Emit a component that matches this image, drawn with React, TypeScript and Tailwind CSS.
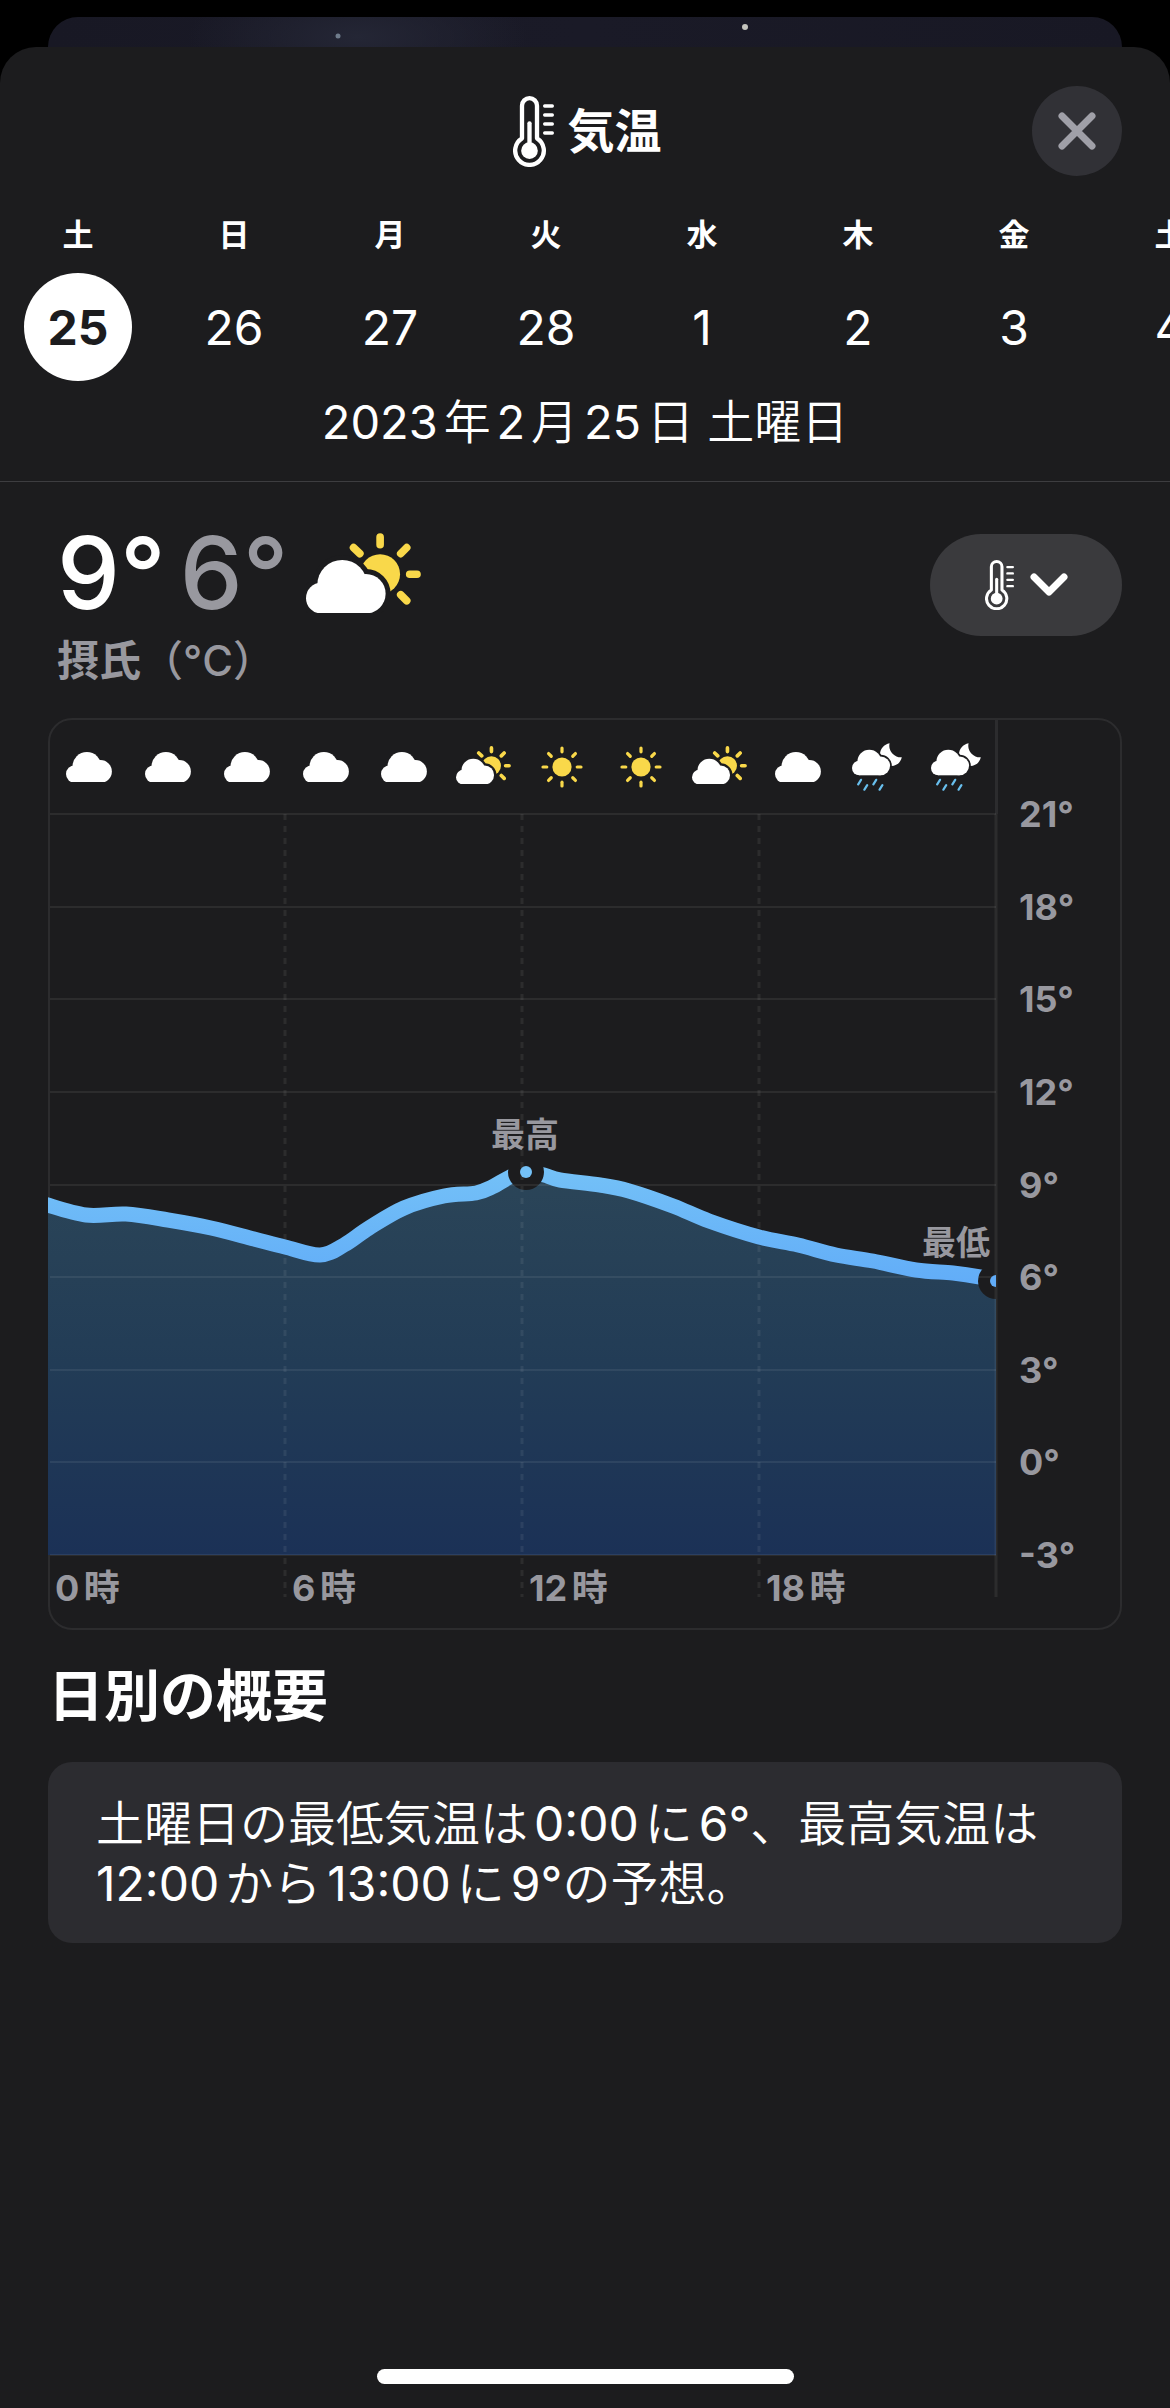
import React from "react";

const DAYS = [
  { weekday: "土", day: 25 },
  { weekday: "日", day: 26 },
  { weekday: "月", day: 27 },
  { weekday: "火", day: 28 },
  { weekday: "水", day: 1 },
  { weekday: "木", day: 2 },
  { weekday: "金", day: 3 },
  { weekday: "土", day: 4 },
];

type Condition = "cloudy" | "partly" | "sunny" | "rainNight";

const CONDITIONS: Condition[] = [
  "cloudy", "cloudy", "cloudy", "cloudy", "cloudy", "partly",
  "sunny", "sunny", "partly", "cloudy", "rainNight", "rainNight",
];

// Chart geometry, in viewBox units
const PLOT = { left: 2, right: 948, top: 96, bottom: 837, axisEnd: 879 };
const TEMPS = [21, 18, 15, 12, 9, 6, 3, 0, -3];
const HOURS = [
  { x: 7, label: "0時" },
  { x: 244, label: "6時" },
  { x: 481, label: "12時" },
  { x: 718, label: "18時" },
];
const CURVE: [number, number][] = [
  [-4, 486], [38, 497], [78, 496], [120, 502], [163, 510], [206, 521], [237, 529],
  [272, 537], [296, 527], [321, 510], [356, 490], [396, 478], [428, 475],
  [444, 469], [462, 459], [478, 454], [496, 457], [512, 462], [552, 467],
  [581, 473], [625, 488], [661, 503], [711, 519], [750, 527], [788, 537],
  [825, 543], [868, 552], [905, 555], [932, 559], [954, 564],
];
const HIGH = { x: 478, y: 454 };
const LOW = { x: 948, y: 563 };

function smoothPath(points: [number, number][]) {
  let d = `M${points[0][0]} ${points[0][1]}`;
  for (let i = 0; i < points.length - 1; i++) {
    const p0 = points[i - 1] ?? points[i];
    const p1 = points[i];
    const p2 = points[i + 1];
    const p3 = points[i + 2] ?? p2;
    d += ` C${p1[0] + (p2[0] - p0[0]) / 6} ${p1[1] + (p2[1] - p0[1]) / 6}`;
    d += ` ${p2[0] - (p3[0] - p1[0]) / 6} ${p2[1] - (p3[1] - p1[1]) / 6}`;
    d += ` ${p2[0]} ${p2[1]}`;
  }
  return d;
}

function Thermometer({ className }: { className: string }) {
  return (
    <svg viewBox="0 0 123 213" className={className} fill="none" stroke="currentColor" aria-hidden="true">
      <path d="M27 127V29a22.5 22.5 0 0 1 45 0V127A43 43 0 1 1 27 127Z" strokeWidth="13" strokeLinejoin="round" />
      <path d="M49.5 82V160" strokeWidth="13" strokeLinecap="round" />
      <circle cx="49.5" cy="164" r="25" fill="currentColor" stroke="none" />
      <path d="M95 30H118M95 57H118M95 84H118M95 111H118" strokeWidth="10" strokeLinecap="round" />
    </svg>
  );
}

function CloudShape() {
  return (
    <>
      <circle cx="46" cy="115" r="46" />
      <circle cx="109" cy="75" r="75" />
      <circle cx="180" cy="101.5" r="59.5" />
      <rect x="46" y="80" width="134" height="81" />
    </>
  );
}

function Cloud({ className }: { className: string }) {
  return (
    <svg viewBox="0 0 240 161" className={className} fill="#fff" role="img" aria-label="曇り">
      <CloudShape />
    </svg>
  );
}

function PartlyCloudy({ className }: { className: string }) {
  return (
    <svg viewBox="0 0 346 242" className={className} role="img" aria-label="晴れ時々曇り">
      <circle cx="223" cy="124" r="60" fill="#f9d84a" />
      <path
        d="M223 12V35M312 124H334M285 62L303 44M143 44L162 62M285 186L303 204"
        stroke="#f9d84a"
        strokeWidth="23"
        strokeLinecap="round"
      />
      <g transform="translate(0 81)" fill="#1c1c1e" stroke="#1c1c1e" strokeWidth="30">
        <CloudShape />
      </g>
      <g transform="translate(0 81)" fill="#fff">
        <CloudShape />
      </g>
    </svg>
  );
}

function Sun({ className }: { className: string }) {
  return (
    <svg viewBox="-21 -21 42 42" className={className} role="img" aria-label="晴れ">
      <circle r="9.6" fill="#f9d84a" />
      {[0, 45, 90, 135, 180, 225, 270, 315].map((angle) => (
        <path
          key={angle}
          d="M0 -15.2V-19"
          transform={`rotate(${angle})`}
          stroke="#f9d84a"
          strokeWidth="3.2"
          strokeLinecap="round"
        />
      ))}
    </svg>
  );
}

function RainNight({ className }: { className: string }) {
  return (
    <svg viewBox="0 0 50 48" className={className} role="img" aria-label="夜間の雨">
      <path
        d="M37.6 .2C32 1.5 28 5.5 28 11.5C28 18 33 22.9 39.5 22.9C44.5 22.9 48.8 19.5 49.8 14.3A11.5 11.5 0 0 1 37.6 .2Z"
        fill="#fff"
      />
      <g transform="translate(0 6.7) scale(.159)" fill="#1c1c1e" stroke="#1c1c1e" strokeWidth="22">
        <CloudShape />
      </g>
      <g transform="translate(0 6.7) scale(.159)" fill="#fff">
        <CloudShape />
      </g>
      <path
        d="M9 36.8L6.2 41.3M15.2 42.2L12.4 46.7M24.2 36.8L21.4 41.3M30.4 42.2L27.6 46.7"
        stroke="#68bfee"
        strokeWidth="2.2"
        strokeLinecap="round"
      />
    </svg>
  );
}

function ConditionIcon({ type }: { type: Condition }) {
  if (type === "partly") return <PartlyCloudy className="w-[55px] -mt-1" />;
  if (type === "sunny") return <Sun className="w-[42px]" />;
  if (type === "rainNight") return <RainNight className="w-[50px]" />;
  return <Cloud className="w-[46px]" />;
}

function TemperatureChart() {
  const line = smoothPath(CURVE);
  const step = (PLOT.bottom - PLOT.top) / (TEMPS.length - 1);

  return (
    <svg viewBox="2 96 1070 814" className="block w-full overflow-visible" role="img" aria-label="気温">
      <defs>
        <linearGradient id="area" gradientUnits="userSpaceOnUse" x1="0" y1="454" x2="0" y2="837">
          <stop offset="0" stopColor="#2b4558" />
          <stop offset=".5" stopColor="#223c56" />
          <stop offset="1" stopColor="#1b3156" />
        </linearGradient>
        <linearGradient id="line" gradientUnits="userSpaceOnUse" x1="0" y1="450" x2="0" y2="570">
          <stop offset="0" stopColor="#74c1f7" />
          <stop offset="1" stopColor="#61acf8" />
        </linearGradient>
        <clipPath id="plot">
          <rect x={PLOT.left - 2} y={PLOT.top} width={PLOT.right - PLOT.left + 2} height={PLOT.bottom - PLOT.top} />
        </clipPath>
        <mask id="markers" maskUnits="userSpaceOnUse" x="0" y="0" width="1074" height="912">
          <rect width="1074" height="912" fill="#fff" />
          <circle cx={HIGH.x} cy={HIGH.y} r="18" fill="#000" />
          <circle cx={LOW.x} cy={LOW.y} r="18" fill="#000" />
        </mask>
      </defs>

      <g clipPath="url(#plot)">
        <path d={`${line}V837H-4Z`} fill="url(#area)" mask="url(#markers)" />
      </g>

      {/* Grid */}
      <g stroke="#fff" strokeOpacity=".07" strokeWidth="2">
        {TEMPS.map((temp, i) => (
          <path key={temp} d={`M${PLOT.left} ${Math.round(PLOT.top + i * step)}H${PLOT.right}`} />
        ))}
        {[237, 474, 711].map((x) => (
          <path key={x} d={`M${x} ${PLOT.top}V${PLOT.axisEnd}`} strokeWidth="3" strokeDasharray="6 6" />
        ))}
        <path d={`M${PLOT.right} ${PLOT.top}V${PLOT.axisEnd}`} strokeWidth="3" />
      </g>

      <g clipPath="url(#plot)">
        <path d={line} fill="none" stroke="url(#line)" strokeWidth="15" mask="url(#markers)" />
        <circle cx={HIGH.x} cy={HIGH.y} r="6" fill="#74c1f7" />
        <circle cx={LOW.x} cy={LOW.y} r="6" fill="#61acf8" />
      </g>

      <g className="fill-[#98989f] font-semibold text-[34px]">
        <text x="443" y="429">最高</text>
        <text x="874" y="537">最低</text>
      </g>
      <g className="fill-[#98989f] font-bold text-4xl">
        {HOURS.map((hour) => (
          <text key={hour.label} x={hour.x} y="883">{hour.label}</text>
        ))}
        {TEMPS.map((temp, i) => (
          <text key={temp} x="971" y={Math.round(PLOT.top + i * step) + 13}>{temp}°</text>
        ))}
      </g>
    </svg>
  );
}

function Num({ children }: { children: React.ReactNode }) {
  return <span className="font-normal">{children}</span>;
}

export default function App() {
  return (
    <div
      lang="ja"
      className="min-h-screen flex flex-col bg-black text-white font-['Inter','Noto_Sans_CJK_JP',sans-serif] [text-autospace:normal]"
    >
      {/* Sheet behind */}
      <div className="mt-[17px] mx-12 h-[30px] rounded-t-[30px] overflow-hidden bg-linear-to-r from-[#181824] via-[#1a1a27] to-[#181824]">
        <svg viewBox="0 0 1074 30" className="block w-full" aria-hidden="true">
          <defs>
            <radialGradient id="haze">
              <stop offset="0" stopColor="#242635" />
              <stop offset="1" stopColor="#242635" stopOpacity="0" />
            </radialGradient>
          </defs>
          <ellipse cx="310" cy="20" rx="170" ry="60" fill="url(#haze)" />
          <circle cx="290" cy="19" r="2.5" fill="#6f7c8c" />
          <circle cx="697" cy="10" r="3" fill="#c4c4bd" />
        </svg>
      </div>

      <main className="flex-1 flex flex-col rounded-t-[36px] bg-[#1c1c1e] overflow-hidden">
        <header className="grid grid-cols-[1fr_auto_1fr] items-center px-12 pt-[39px]">
          <h1 className="col-start-2 pl-1 flex items-center gap-[14px] text-[47px] leading-[60px] font-bold">
            <Thermometer className="w-[41px]" />
            気温
          </h1>
          <button
            type="button"
            aria-label="閉じる"
            className="justify-self-end size-[90px] rounded-full bg-[#313136] flex items-center justify-center"
          >
            <svg viewBox="0 0 38 38" className="w-[38px]" stroke="#a0a0a8" strokeWidth="7" strokeLinecap="round" aria-hidden="true">
              <path d="M4 4L34 34M34 4L4 34" />
            </svg>
          </button>
        </header>

        {/* Day picker */}
        <div className="mt-[37px] flex overflow-hidden">
          {DAYS.map((item, i) => (
            <button key={i} type="button" className="basis-2/15 shrink-0 flex flex-col items-center gap-4">
              <span className="text-[31px] leading-[44px] font-semibold">{item.weekday}</span>
              <span
                className={
                  i === 0
                    ? "size-[108px] pt-0.5 rounded-full bg-white text-[#1c1c1e] text-5xl font-bold flex items-center justify-center"
                    : "size-[108px] pt-0.5 text-5xl flex items-center justify-center"
                }
              >
                {item.day}
              </span>
            </button>
          ))}
        </div>
        <p className="mt-[11px] pb-[29px] border-b border-[#3d3d40] text-center text-[47px] leading-[60px] font-[350]">
          <Num>2023</Num>年<Num>2</Num>月<Num>25</Num>日 土曜日
        </p>

        <section className="px-12 pt-[43px]">
          <div className="flex justify-between items-start">
            <div className="pl-[9px]">
              <div className="flex items-center text-[100px] leading-[96px] font-medium">
                <span>9°</span>
                <span className="ml-3.5 text-[#98989f]">6°</span>
                <PartlyCloudy className="ml-4.5 w-[115px]" />
              </div>
              <p className="mt-[13px] text-[42px] leading-[54px] font-medium text-[#98989f]">
                <span className="font-bold">摂氏</span>（°C）
              </p>
            </div>
            <button
              type="button"
              aria-label="表示する項目"
              className="mt-[9px] w-48 h-[102px] rounded-full bg-[#3a3a3d] flex items-center justify-center gap-4"
            >
              <Thermometer className="w-[29px]" />
              <svg viewBox="0 0 38 24" className="w-[38px]" fill="none" stroke="currentColor" strokeWidth="7" strokeLinecap="round" strokeLinejoin="round" aria-hidden="true">
                <path d="M4 4L19 19L34 4" />
              </svg>
            </button>
          </div>

          <div className="mt-[30px] border-2 border-[#2c2c2e] rounded-3xl">
            <div className="flex h-[94px]">
              <div className="flex-1 grid grid-cols-12 items-center justify-items-center">
                {CONDITIONS.map((type, i) => (
                  <ConditionIcon key={i} type={type} />
                ))}
              </div>
              <div className="w-[125px] border-l-3 border-[#2c2c2e]" />
            </div>
            <TemperatureChart />
          </div>

          <h2 className="mt-7 text-[56px] leading-[76px] font-bold">日別の概要</h2>
          <div className="mt-7 px-12 pt-8 pb-[29px] rounded-3xl bg-[#2c2c30]">
            <p className="text-5xl leading-[60px] font-[350]">
              土曜日の最低気温は<Num>0:00</Num>に<Num>6°</Num>、最高気温は
              <br />
              <Num>12:00</Num>から<Num>13:00</Num>に<Num>9°</Num>の予想。
            </p>
          </div>
        </section>

        <div className="mt-auto mb-6 mx-auto h-[15px] w-[417px] rounded-full bg-white" />
      </main>
    </div>
  );
}
